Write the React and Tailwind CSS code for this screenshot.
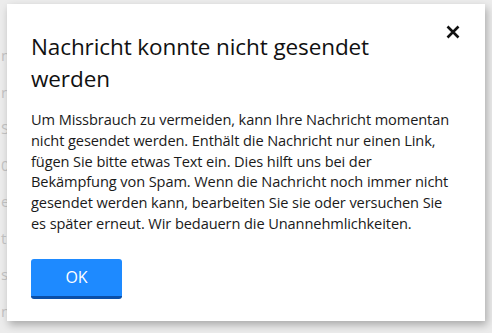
import React from "react";

const bgLines = ["n", "r", "S", "0", "e", "t", "s", "n"];

const App = () => {
  return (
    <div
      className="relative w-[492px] h-[333px] overflow-hidden bg-[#ececec]"
      style={{ fontFamily: '"Open Sans", "Noto Sans", sans-serif' }}
    >
      {/* faded page behind the modal */}
      <div className="flex flex-col gap-[14px] pt-[44px] pl-[1px] text-[15px] text-[#c4c4c4]">
        {bgLines.map((ch, i) => (
          <span key={i}>{ch}</span>
        ))}
      </div>

      <div className="absolute left-[7px] top-[4px] w-[478px] h-[317px] bg-white shadow-[2px_4px_8px_rgba(0,0,0,0.28)]">
        <div className="flex items-start justify-between pl-[24px] pr-[21px] pt-[27px]">
          <h2 className="text-[22.5px] leading-[32px] text-[#111] tracking-[-0.1px]">
            Nachricht konnte nicht gesendet
            <br />
            werden
          </h2>
          <button className="mt-[-10px] p-1 text-[#111]" aria-label="Schließen">
            <svg width="14" height="14" viewBox="0 0 14 14">
              <path
                d="M1.5 1.5 L12.5 12.5 M12.5 1.5 L1.5 12.5"
                stroke="currentColor"
                strokeWidth="2.6"
                strokeLinecap="butt"
              />
            </svg>
          </button>
        </div>

        <p className="mt-[14px] px-[24px] text-[14.6px] leading-[20.8px] text-[#1a1a1a] tracking-[-0.1px]">
          Um Missbrauch zu vermeiden, kann Ihre Nachricht momentan
          <br />
          nicht gesendet werden. Enthält die Nachricht nur einen Link,
          <br />
          fügen Sie bitte etwas Text ein. Dies hilft uns bei der
          <br />
          Bekämpfung von Spam. Wenn die Nachricht noch immer nicht
          <br />
          gesendet werden kann, bearbeiten Sie sie oder versuchen Sie
          <br />
          es später erneut. Wir bedauern die Unannehmlichkeiten.
        </p>

        <div className="px-[24px] pt-[25px]">
          <button className="w-[91px] h-[40px] rounded-[3px] bg-[#1e8aff] border-b-[3px] border-[#0a4fa8] text-white text-[16px]">
            OK
          </button>
        </div>
      </div>
    </div>
  );
};

export default App;
